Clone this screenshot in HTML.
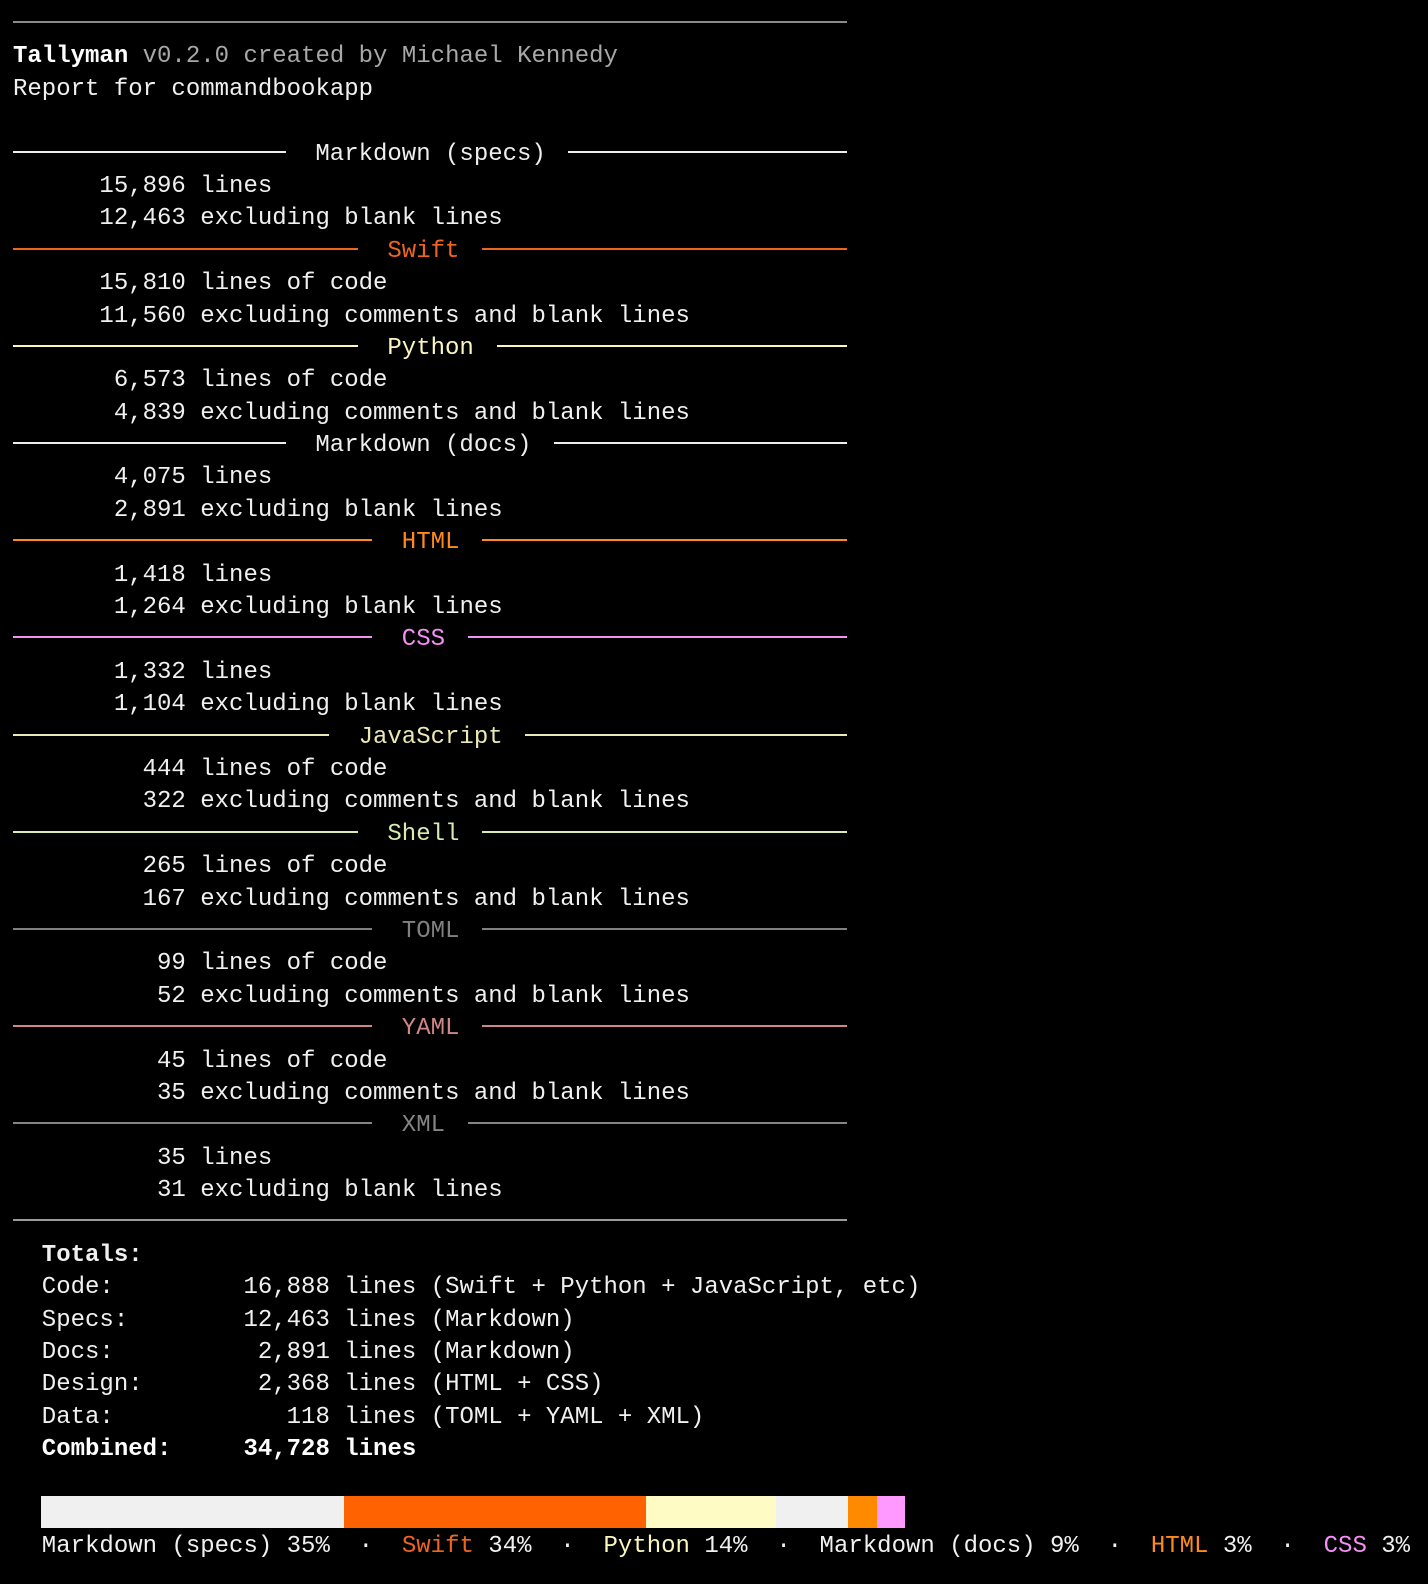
<!DOCTYPE html>
<html><head><meta charset="utf-8"><style>
html,body{margin:0;padding:0;background:#000;}
body{width:1428px;height:1584px;overflow:hidden;position:relative;font-family:"Liberation Mono",monospace;font-size:24px;color:#f0f0f0;}
#c{position:absolute;left:13px;top:9px;width:1415px;}
.r{height:32.4px;line-height:32.4px;white-space:pre;position:relative;}
.b{font-weight:bold;}
.h .l,.h .rr{position:absolute;top:12px;height:2px;background:var(--k);}
.h .l{left:0;width:calc((var(--c) - 2) * 14.28px + 2px);}
.h .rr{left:calc((var(--c) + var(--n) + 2) * 14.28px - 2px);width:calc(834px - (var(--c) + var(--n) + 2) * 14.28px + 2px);}
.h .t{position:absolute;left:calc(var(--c) * 14.4px);color:var(--k);}
.rule{position:absolute;left:0;width:834px;top:12px;height:2px;}
.bar{position:absolute;top:1496px;height:32px;}
</style></head><body>
<div id="c">
<div class="r"><div class="rule" style="background:#8a8a8a"></div></div>
<div class="r"><span class="b" style="color:#fff">Tallyman</span><span style="color:#a8a8a8"> v0.2.0 created by Michael Kennedy</span></div>
<div class="r">Report for commandbookapp</div>
<div class="r"></div>
<div class="r h" style="--c:21;--n:16;--k:#eeeeee"><span class="l"></span><span class="t">Markdown (specs)</span><span class="rr"></span></div>
<div class="r">      15,896 lines</div>
<div class="r">      12,463 excluding blank lines</div>
<div class="r h" style="--c:26;--n:5;--k:#f0641e"><span class="l"></span><span class="t">Swift</span><span class="rr"></span></div>
<div class="r">      15,810 lines of code</div>
<div class="r">      11,560 excluding comments and blank lines</div>
<div class="r h" style="--c:26;--n:6;--k:#fbf6c0"><span class="l"></span><span class="t">Python</span><span class="rr"></span></div>
<div class="r">       6,573 lines of code</div>
<div class="r">       4,839 excluding comments and blank lines</div>
<div class="r h" style="--c:21;--n:15;--k:#eeeeee"><span class="l"></span><span class="t">Markdown (docs)</span><span class="rr"></span></div>
<div class="r">       4,075 lines</div>
<div class="r">       2,891 excluding blank lines</div>
<div class="r h" style="--c:27;--n:4;--k:#ff8a1c"><span class="l"></span><span class="t">HTML</span><span class="rr"></span></div>
<div class="r">       1,418 lines</div>
<div class="r">       1,264 excluding blank lines</div>
<div class="r h" style="--c:27;--n:3;--k:#f490f4"><span class="l"></span><span class="t">CSS</span><span class="rr"></span></div>
<div class="r">       1,332 lines</div>
<div class="r">       1,104 excluding blank lines</div>
<div class="r h" style="--c:24;--n:10;--k:#ece8b4"><span class="l"></span><span class="t">JavaScript</span><span class="rr"></span></div>
<div class="r">         444 lines of code</div>
<div class="r">         322 excluding comments and blank lines</div>
<div class="r h" style="--c:26;--n:5;--k:#d6ecb0"><span class="l"></span><span class="t">Shell</span><span class="rr"></span></div>
<div class="r">         265 lines of code</div>
<div class="r">         167 excluding comments and blank lines</div>
<div class="r h" style="--c:27;--n:4;--k:#808080"><span class="l"></span><span class="t">TOML</span><span class="rr"></span></div>
<div class="r">          99 lines of code</div>
<div class="r">          52 excluding comments and blank lines</div>
<div class="r h" style="--c:27;--n:4;--k:#d08686"><span class="l"></span><span class="t">YAML</span><span class="rr"></span></div>
<div class="r">          45 lines of code</div>
<div class="r">          35 excluding comments and blank lines</div>
<div class="r h" style="--c:27;--n:3;--k:#848484"><span class="l"></span><span class="t">XML</span><span class="rr"></span></div>
<div class="r">          35 lines</div>
<div class="r">          31 excluding blank lines</div>
<div class="r"><div class="rule" style="background:#9a9a9a"></div></div>
<div class="r b">  Totals:</div>
<div class="r">  Code:         16,888 lines (Swift + Python + JavaScript, etc)</div>
<div class="r">  Specs:        12,463 lines (Markdown)</div>
<div class="r">  Docs:          2,891 lines (Markdown)</div>
<div class="r">  Design:        2,368 lines (HTML + CSS)</div>
<div class="r">  Data:            118 lines (TOML + YAML + XML)</div>
<div class="r b" style="color:#fff">  Combined:     34,728 lines</div>
</div>
<div class="bar" style="left:41px;width:303px;background:#f0f0f0"></div>
<div class="bar" style="left:344px;width:302px;background:#ff6200"></div>
<div class="bar" style="left:646px;width:130px;background:#fffbc4"></div>
<div class="bar" style="left:776px;width:72px;background:#f0f0f0"></div>
<div class="bar" style="left:848px;width:29px;background:#ff8a00"></div>
<div class="bar" style="left:877px;width:28px;background:#ff99ff"></div>
<div style="position:absolute;left:13px;top:1531px;height:32.4px;line-height:32.4px;white-space:pre;">  Markdown (specs) 35%  ·  <span style="color:#f0641e">Swift</span> 34%  ·  <span style="color:#fbf6c0">Python</span> 14%  ·  Markdown (docs) 9%  ·  <span style="color:#ff8a1c">HTML</span> 3%  ·  <span style="color:#f490f4">CSS</span> 3%</div>
</body></html>
